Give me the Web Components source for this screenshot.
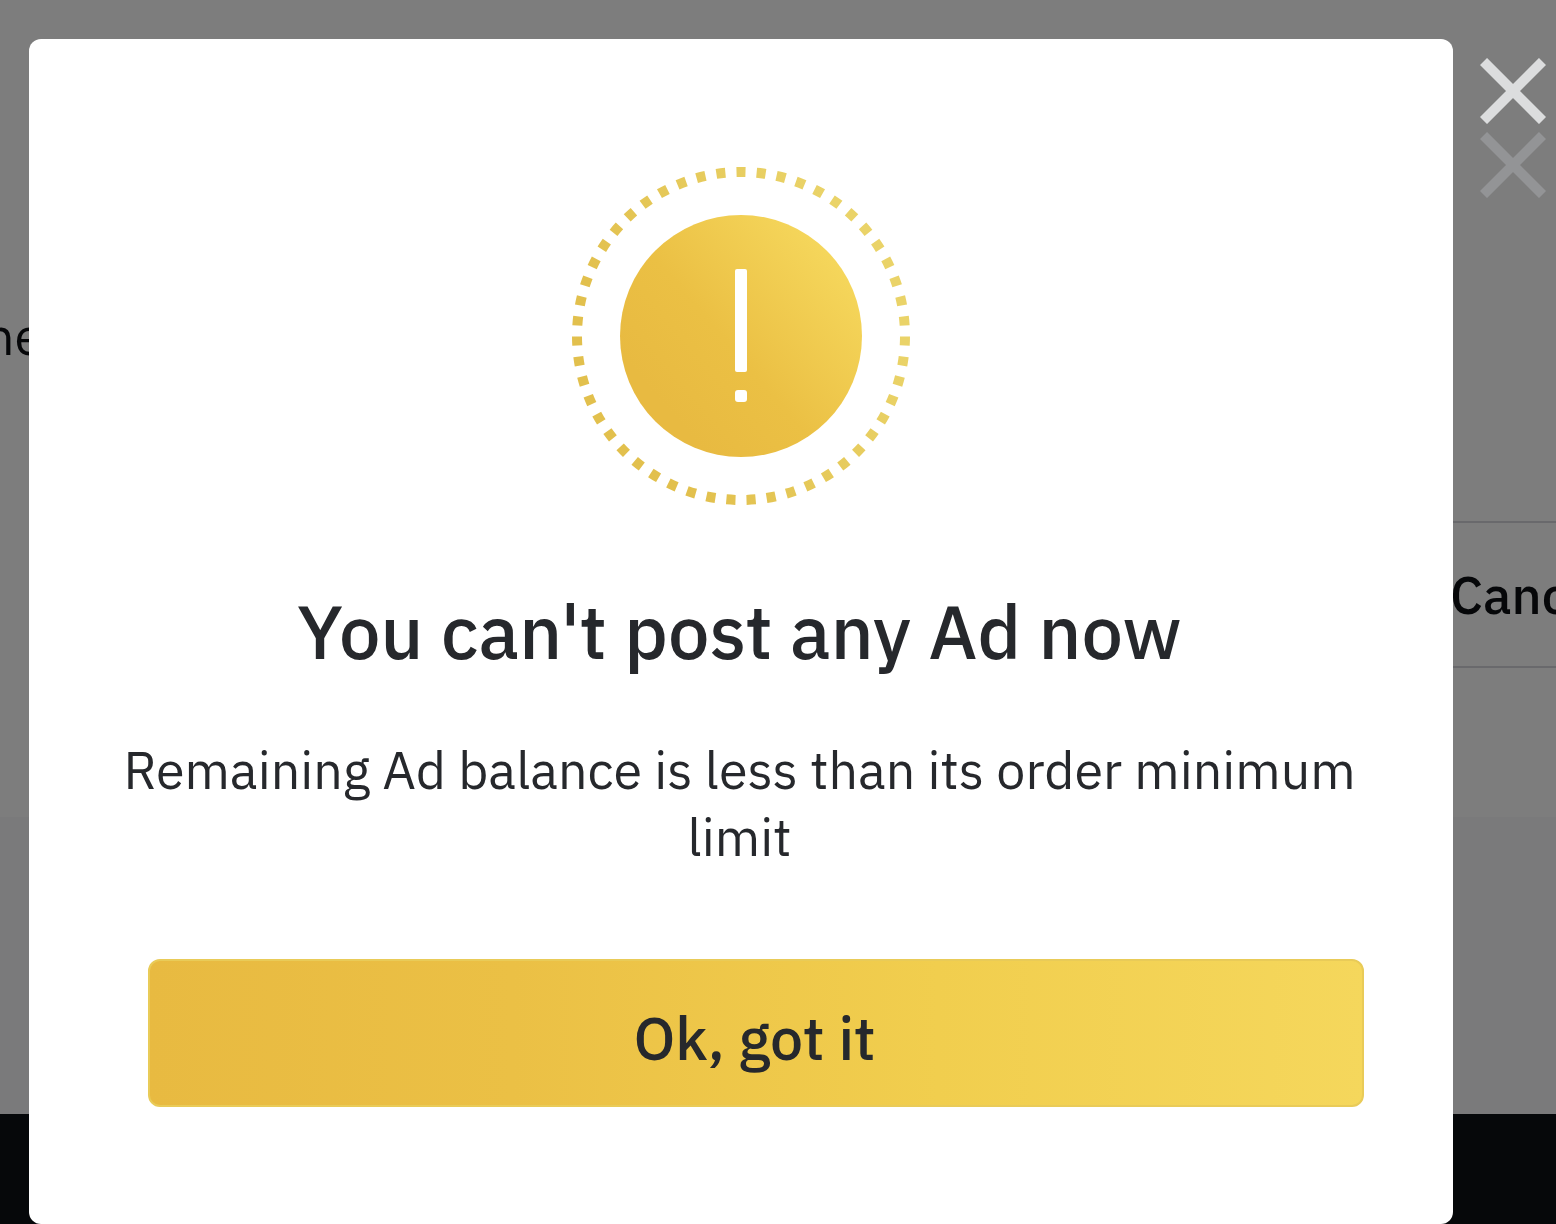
<!DOCTYPE html>
<html lang="en">
<head>
<meta charset="utf-8">
<meta name="viewport" content="width=device-width, initial-scale=1">
<title>Post Ad</title>
<style>
  body { margin: 0; font-family: "IBM Plex Sans", Roboto, "Liberation Sans", sans-serif; color: #26282c; }
</style>
</head>
<body>
<ad-screen>
  <ad-backdrop slot="page"></ad-backdrop>
  <notice-dialog heading="You can't post any Ad now">
    <alert-mark slot="icon"></alert-mark>
    Remaining Ad balance is less than its order minimum limit
    <gold-button slot="action">Ok, got it</gold-button>
  </notice-dialog>
  <close-button slot="close" label="Close notice"></close-button>
  <close-button slot="close" label="Close form" faded></close-button>
</ad-screen>
<script>
const define = (name, html, setup) => {
  const template = document.createElement('template');
  template.innerHTML = html;
  customElements.define(name, class extends HTMLElement {
    constructor() {
      super();
      this.attachShadow({ mode: 'open' }).append(template.content.cloneNode(true));
    }
    connectedCallback() { if (setup) setup(this, this.shadowRoot); }
  });
};

define('ad-screen', `
  <style>
    :host { display: grid; min-height: 100vh; overflow: hidden; }
    .page, .overlay { grid-area: 1 / 1; min-width: 0; }
    .page { display: grid; }
    .overlay { z-index: 1; display: flex; align-items: flex-start; box-sizing: border-box;
      padding: 39px 10px 0 29px; gap: 27px; background: rgba(0, 0, 0, .5); }
    .dialog { flex: 1; min-width: 0; }
    .closers { display: flex; flex-direction: column; gap: 8px; padding-top: 19px; }
  </style>
  <div class="page"><slot name="page"></slot></div>
  <div class="overlay">
    <div class="dialog"><slot></slot></div>
    <div class="closers"><slot name="close"></slot></div>
  </div>`);

define('ad-backdrop', `
  <style>
    :host { display: flex; flex-direction: column; min-width: 0; overflow: hidden; color: #0c0e12; }
    .form { box-sizing: border-box; height: 817px; padding-top: 302px; background: #fafafa; }
    .field { margin: 0 0 0 -15px; font-size: 52px; line-height: 68px; }
    .actions { display: flex; justify-content: flex-end; margin-top: 151px; }
    button { box-sizing: border-box; width: 160px; height: 147px; margin-right: -4px; padding: 0 0 0 48px;
      border: 2px solid #d2d3d8; background: none; color: inherit; font-family: inherit; font-size: 52px;
      font-weight: 500; text-align: left; }
    .band { height: 297px; background: #f4f4f6; }
    footer { flex: 1; background: #0c1014; }
  </style>
  <div class="form">
    <p class="field">ne</p>
    <div class="actions"><button type="button">Canc</button></div>
  </div>
  <div class="band"></div>
  <footer></footer>`);

define('notice-dialog', `
  <style>
    :host { display: flex; flex-direction: column; box-sizing: border-box; padding: 124px 89px 117px;
      border-radius: 12px; background: #fff; text-align: center; }
    .icon { display: flex; justify-content: center; }
    h1, p { padding-right: 3px; }
    h1 { margin: 72px 0 0; font-size: 74px; line-height: 100px; font-weight: 500; }
    p { margin: 55px 0 0; font-size: 52px; line-height: 67px; }
    .action { margin: 89px 0 0 30px; }
  </style>
  <div class="icon"><slot name="icon"></slot></div>
  <h1></h1>
  <p><slot></slot></p>
  <div class="action"><slot name="action"></slot></div>`,
  (host, root) => {
    host.setAttribute('role', 'dialog');
    root.querySelector('h1').textContent = host.getAttribute('heading');
  });

define('alert-mark', `
  <style>:host, svg { display: block; }</style>
  <svg width="346" height="346" viewBox="0 0 346 346" aria-hidden="true">
    <defs>
      <linearGradient id="disc" x1=".15" y1=".75" x2=".85" y2=".15">
        <stop offset="0" stop-color="#e8ba41"/><stop offset=".4" stop-color="#ebc044"/><stop offset="1" stop-color="#f5d65b"/>
      </linearGradient>
      <linearGradient id="ring" gradientUnits="userSpaceOnUse" x1="60" y1="200" x2="290" y2="90">
        <stop offset="0" stop-color="#e2c04d"/><stop offset="1" stop-color="#ead368"/>
      </linearGradient>
    </defs>
    <path d="M173 9a164 164 0 0 1 0 328a164 164 0 0 1 0-328" fill="none" stroke="url(#ring)" stroke-width="10"
      pathLength="1020" stroke-dasharray="9 11" stroke-dashoffset="4.5"/>
    <circle cx="173" cy="173" r="121" fill="url(#disc)"/>
    <rect x="167" y="106" width="12" height="103" rx="2" fill="#fff"/>
    <rect x="167" y="227" width="12" height="12" rx="3" fill="#fff"/>
  </svg>`);

define('gold-button', `
  <style>
    :host { display: block; }
    button { display: block; box-sizing: border-box; width: 100%; height: 148px; padding: 10px 3px 0 0; border: 2px solid #e9cb58;
      border-radius: 12px; background: linear-gradient(90deg, #e8ba41, #ebc045 30%, #f1ce4e 65%, #f5d75c) border-box;
      color: #26282c; font-family: inherit; font-size: 59px; font-weight: 500; line-height: 80px; }
  </style>
  <button type="button"><slot></slot></button>`);

define('close-button', `
  <style>
    :host { display: block; color: #dcddde; }
    :host([faded]) { color: #939496; }
    button { display: block; padding: 0; border: 0; background: none; color: inherit; }
    svg { display: block; }
  </style>
  <button type="button">
    <svg width="66" height="66" viewBox="0 0 66 66" aria-hidden="true">
      <path d="M3.5 3.5l59 59M62.5 3.5l-59 59" fill="none" stroke="currentColor" stroke-width="10"/>
    </svg>
  </button>`,
  (host, root) => root.querySelector('button').setAttribute('aria-label', host.getAttribute('label')));
</script>
</body>
</html>
